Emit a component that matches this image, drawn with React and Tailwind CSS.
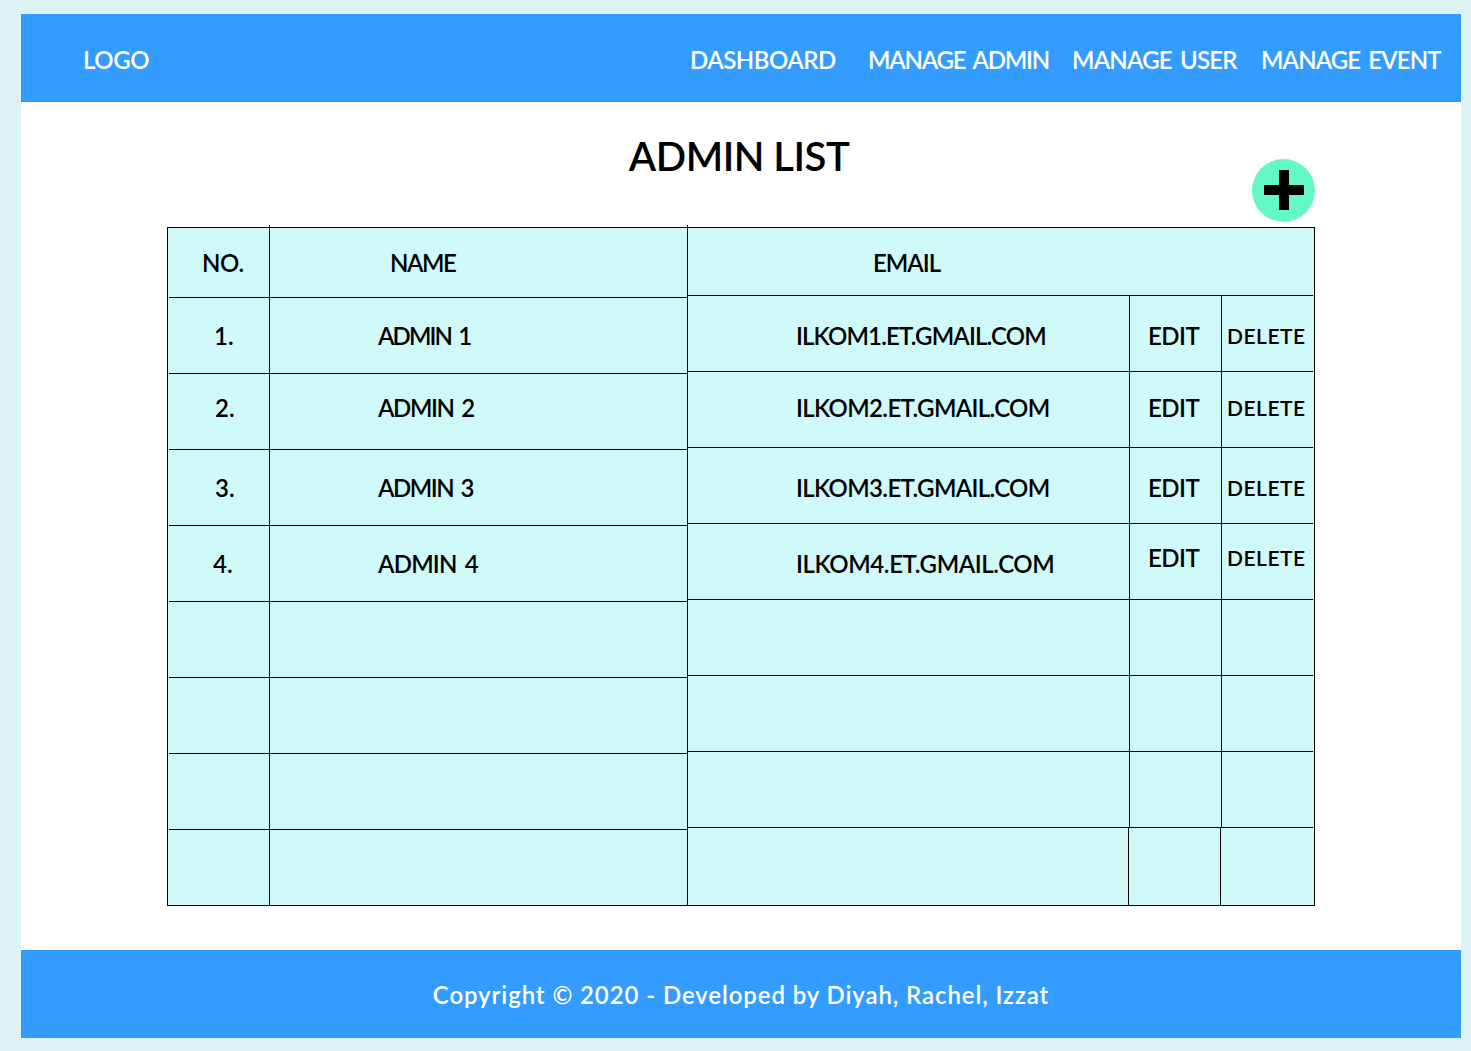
import React from 'react';

const font = 'font-["Lato","Liberation_Sans",sans-serif]';

const navItems = [
  { label: 'DASHBOARD', className: 'w-[178px] tracking-[-0.5px]' },
  { label: 'MANAGE ADMIN', className: 'w-[204px] tracking-[-1.2px] [word-spacing:3px]' },
  { label: 'MANAGE USER', className: 'w-[189px] tracking-[-0.8px] [word-spacing:3px]' },
  { label: 'MANAGE EVENT', className: 'w-[180px] tracking-[-0.9px] [word-spacing:3px]' },
];

// the line does not quite reach the table border at its ends
const lineGapLeft = 'relative before:absolute before:left-0 before:bottom-[-1px] before:w-px before:h-px before:bg-[#d0f9f9]';
const lineGapRight = 'relative before:absolute before:right-0 before:bottom-[-1px] before:w-px before:h-px before:bg-[#d0f9f9]';

const leftRows = [
  { no: '1.', name: 'ADMIN 1', height: 'h-[76px]', noPad: 'pl-[46px]', track: 'tracking-[-1.9px] [word-spacing:3px]' },
  { no: '2.', name: 'ADMIN 2', height: 'h-[76px]', shift: 'pb-[8px]', noPad: 'pl-[47px]', track: 'tracking-[-1.4px] [word-spacing:3px]' },
  { no: '3.', name: 'ADMIN 3', height: 'h-[76px]', noPad: 'pl-[47px]', track: 'tracking-[-1.5px] [word-spacing:3px]' },
  { no: '4.', name: 'ADMIN 4', height: 'h-[76px]', noPad: 'pl-[45px]', track: 'tracking-[-0.8px] [word-spacing:3px]' },
  { height: 'h-[76px]' },
  { height: 'h-[76px]' },
  { height: 'h-[76px]' },
  { height: 'h-[75px]', last: true },
];

const rightRows = [
  { email: 'ILKOM1.ET.GMAIL.COM', shift: 'pt-[4px]', actionShift: 'pt-[4px]', track: 'tracking-[-0.85px]' },
  { email: 'ILKOM2.ET.GMAIL.COM', shift: 'pb-[4px]', actionShift: 'pb-[4px]', track: 'tracking-[-0.65px]' },
  { email: 'ILKOM3.ET.GMAIL.COM', shift: 'pt-[4px]', actionShift: 'pt-[4px]', track: 'tracking-[-0.65px]' },
  { email: 'ILKOM4.ET.GMAIL.COM', shift: 'pt-[4px]', actionShift: 'pb-[8px]', track: 'tracking-[-0.4px]' },
  {},
  {},
  {},
  { last: true },
];

const Tick = () => <span className="absolute right-[-1px] top-[-3px] h-[3px] w-px bg-black" />;

const LeftRow = ({ row }) => (
  <div className={`flex ${row.height}`}>
    <div className={`flex w-[102px] shrink-0 items-center border-r border-black ${row.last ? '' : `border-b ${lineGapLeft}`} ${row.shift || ''} ${row.noPad || ''}`}>
      {row.no}
    </div>
    <div className={`flex w-[417px] shrink-0 items-center border-black pl-[108px] ${row.last ? '' : 'border-b'} ${row.shift || ''} ${row.track || ''}`}>
      {row.name}
    </div>
  </div>
);

const RightRow = ({ row }) => (
  <div className={`flex ${row.last ? 'h-[77px]' : `h-[76px] border-b border-black ${lineGapRight}`}`}>
    <div className={`flex ${row.last ? 'w-[441px]' : 'w-[442px]'} shrink-0 items-center border-r border-black pl-[108px] ${row.shift || ''} ${row.track || ''}`}>
      {row.email}
    </div>
    <div className={`flex w-[92px] shrink-0 items-center border-r border-black pl-[18px] tracking-[-0.5px] ${row.actionShift || ''}`}>
      {row.email ? 'EDIT' : ''}
    </div>
    <div className={`flex flex-1 items-center pl-[5px] text-[21px] tracking-[0.5px] ${row.actionShift || ''}`}>
      {row.email ? 'DELETE' : ''}
    </div>
  </div>
);

export default function App() {
  return (
    <div className={`flex min-h-[1051px] flex-col bg-[#dcf2f4] pb-[13px] pl-[21px] pr-[10px] pt-[14px] font-semibold ${font}`}>
      <div className="flex min-h-[1024px] flex-col bg-white">
        <header className="flex h-[88px] items-center justify-between bg-[#349cff] pr-[20px] pt-[3px] text-[24px] text-white">
          <span className="pl-[62px] tracking-[-0.4px]">LOGO</span>
          <nav className="flex">
            {navItems.map((item) => (
              <span key={item.label} className={`whitespace-nowrap ${item.className}`}>
                {item.label}
              </span>
            ))}
          </nav>
        </header>

        <main className="relative flex-1 text-[24px] text-black">
          <h1 className="pr-[4px] pt-[29px] text-center text-[40px] font-semibold leading-[50px] tracking-[-0.5px]">ADMIN LIST</h1>

          <div className="absolute left-[1231px] top-[57px] h-[63px] w-[63px] rounded-full bg-[#64f8c4]">
            <svg viewBox="0 0 63 63" className="h-full w-full" fill="#000">
              <path d="M27 11h10v15h15v10h-15v15h-10v-15h-15v-10h15z" />
            </svg>
          </div>

          <div className="ml-[146px] mt-[46px] flex h-[679px] w-[1148px] border border-black bg-[#d0f9f9] whitespace-nowrap">
            <div className="w-[519px] shrink-0">
              <div className="flex h-[70px]">
                <div className={`flex w-[102px] shrink-0 items-center border-b border-r border-black pl-[34px] tracking-[-0.4px] ${lineGapLeft}`}>
                  NO.
                  <Tick />
                </div>
                <div className="relative flex w-[417px] shrink-0 items-center border-b border-black pl-[120px] tracking-[-1.5px]">
                  NAME
                  <Tick />
                </div>
              </div>
              {leftRows.map((row, i) => (
                <LeftRow key={i} row={row} />
              ))}
            </div>
            <div className="flex-1 border-l border-black">
              <div className={`flex h-[68px] items-center border-b border-black pl-[185px] pt-[2px] tracking-[-1px] ${lineGapRight}`}>EMAIL</div>
              {rightRows.map((row, i) => (
                <RightRow key={i} row={row} />
              ))}
            </div>
          </div>
        </main>

        <footer className="flex h-[88px] items-center justify-center bg-[#349cff] pt-[2px] text-[24px] tracking-[0.9px] text-white">
          Copyright © 2020 - Developed by Diyah, Rachel, Izzat
        </footer>
      </div>
    </div>
  );
}
